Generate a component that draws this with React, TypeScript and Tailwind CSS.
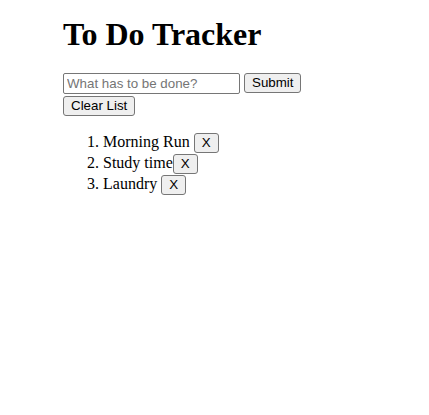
import { useState } from "react";

const App = () => {
  const [todos] = useState([
    { id: 1, text: "Morning Run " },
    { id: 2, text: "Study time" },
    { id: 3, text: "Laundry " },
  ]);

  const btn =
    "inline-block px-[7px] py-[1px] border border-[#767676] rounded-[3px] bg-[#efefef] text-black font-['Liberation_Sans',Arial,sans-serif] text-[13.33px] leading-[16px] align-baseline";

  return (
    <div className="min-h-[415px] bg-white pl-[63px] pt-[16px] font-['Liberation_Serif','Times_New_Roman',serif] text-[16px] text-black">
      <h1 className="text-[32px] font-bold leading-[37px] mb-[20px]">To Do Tracker</h1>

      <form onSubmit={(e) => e.preventDefault()}>
        <div className="flex items-start gap-[4px] h-[23px]">
          <input
            type="text"
            placeholder="What has to be done?"
            className="w-[177px] h-[21px] px-[3px] border border-[#767676] rounded-[2px] bg-white font-['Liberation_Sans',Arial,sans-serif] text-[13.33px] placeholder:text-[#757575]"
          />
          <button type="submit" className={btn}>
            Submit
          </button>
        </div>
        <div className="flex">
          <button type="button" className={btn}>
            Clear List
          </button>
        </div>
      </form>

      <ol className="list-decimal pl-[40px] mt-[15px] mb-[16px]">
        {todos.map((todo) => (
          <li key={todo.id} className="h-[21px] leading-[21px]">
            {todo.text}
            <button className={btn}>X</button>
          </li>
        ))}
      </ol>
    </div>
  );
};

export default App;
